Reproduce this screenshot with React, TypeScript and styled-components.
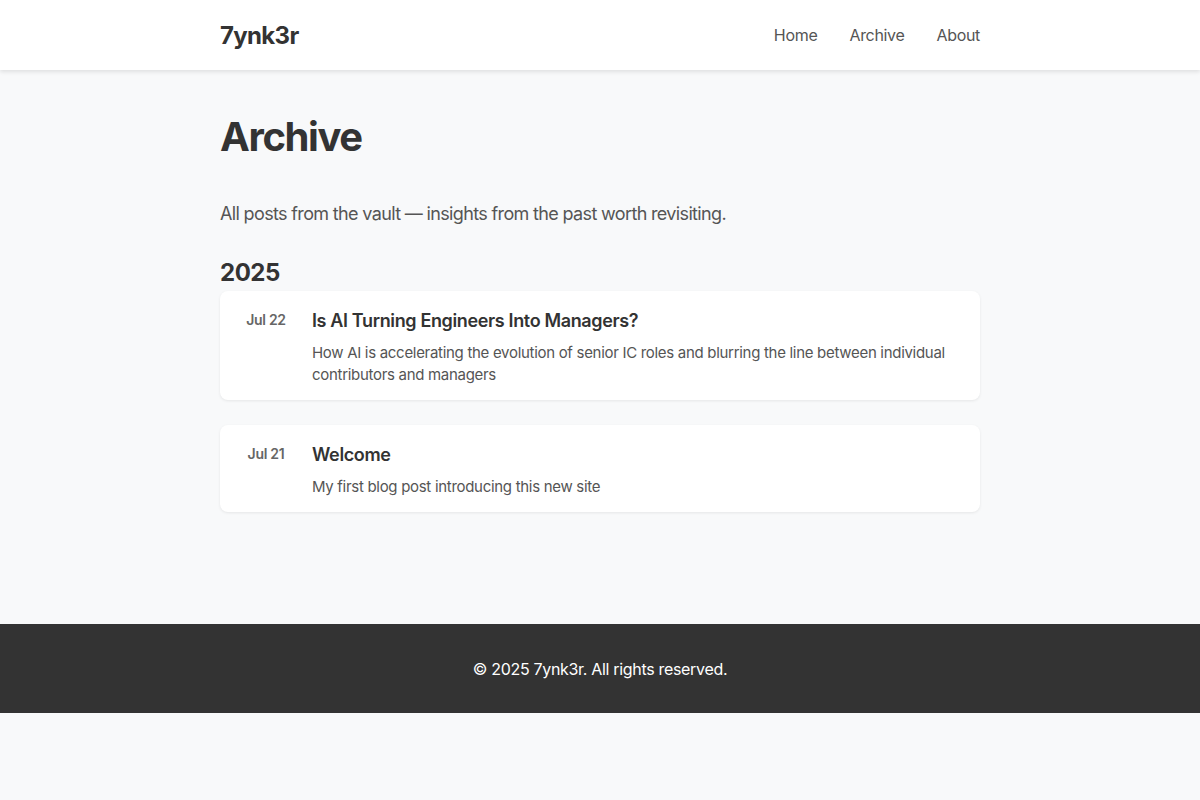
import React from "react";
import styled, { createGlobalStyle } from "styled-components";

const Global = createGlobalStyle`
  * { box-sizing: border-box; }
  html, body { margin: 0; padding: 0; }
  body {
    background: #f8f9fa;
    font-family: Inter, "Noto Sans", sans-serif;
    color: #333;
  }
`;

const Header = styled.header`
  background: #fff;
  height: 70px;
  box-shadow: 0 2px 4px rgba(0, 0, 0, 0.1);
`;

const Container = styled.div`
  width: 760px;
  margin: 0 auto;
`;

const HeaderInner = styled(Container)`
  height: 100%;
  display: flex;
  align-items: center;
  justify-content: space-between;
`;

const Logo = styled.a`
  font-size: 24px;
  font-weight: 700;
  letter-spacing: -0.028em;
  color: #333;
  text-decoration: none;
`;

const Nav = styled.nav`
  display: flex;
  gap: 32px;
`;

const NavLink = styled.a`
  font-size: 16px;
  letter-spacing: -0.02em;
  color: #555;
  text-decoration: none;
`;

const Main = styled.main`
  padding: 43px 0 112px;
`;

const Title = styled.h1`
  font-size: 40px;
  line-height: 48px;
  font-weight: 700;
  letter-spacing: -0.035em;
  margin: 0 0 39px;
  color: #333;
`;

const Intro = styled.p`
  font-size: 18px;
  line-height: 27px;
  letter-spacing: -0.036em;
  color: #555;
  margin: 0 0 31px;
`;

const Year = styled.h2`
  font-size: 24px;
  line-height: 29px;
  font-weight: 700;
  letter-spacing: -0.02em;
  margin: 0 0 4px;
  color: #333;
`;

const List = styled.div`
  display: flex;
  flex-direction: column;
  gap: 25px;
`;

const Card = styled.article`
  background: #fff;
  border-radius: 8px;
  box-shadow: 0 1px 3px rgba(0, 0, 0, 0.08);
  padding: 18px 24px 14px;
  display: flex;
  gap: 24px;
`;

const DateLabel = styled.div`
  width: 44px;
  flex-shrink: 0;
  text-align: center;
  font-size: 14px;
  line-height: 22px;
  font-weight: 600;
  letter-spacing: -0.02em;
  color: #666;
`;

const Body = styled.div`
  flex: 1;
`;

const PostTitle = styled.h3`
  font-size: 18px;
  line-height: 24px;
  font-weight: 600;
  letter-spacing: -0.02em;
  margin: 0 0 9px;
  color: #333;
`;

const Desc = styled.p`
  font-size: 15px;
  line-height: 22px;
  letter-spacing: -0.02em;
  color: #555;
  margin: 0;
`;

const Footer = styled.footer`
  background: #333;
  color: #fff;
  height: 89px;
  display: flex;
  align-items: center;
  justify-content: center;
  font-size: 16px;
  letter-spacing: -0.02em;
`;

const posts = [
  {
    date: "Jul 22",
    title: "Is AI Turning Engineers Into Managers?",
    desc: "How AI is accelerating the evolution of senior IC roles and blurring the line between individual contributors and managers",
  },
  {
    date: "Jul 21",
    title: "Welcome",
    desc: "My first blog post introducing this new site",
  },
];

export default function App() {
  return (
    <>
      <Global />
      <Header>
        <HeaderInner>
          <Logo href="#">7ynk3r</Logo>
          <Nav>
            <NavLink href="#">Home</NavLink>
            <NavLink href="#">Archive</NavLink>
            <NavLink href="#">About</NavLink>
          </Nav>
        </HeaderInner>
      </Header>
      <Main>
        <Container>
          <Title>Archive</Title>
          <Intro>All posts from the vault — insights from the past worth revisiting.</Intro>
          <Year>2025</Year>
          <List>
            {posts.map((p) => (
              <Card key={p.title}>
                <DateLabel>{p.date}</DateLabel>
                <Body>
                  <PostTitle>{p.title}</PostTitle>
                  <Desc>{p.desc}</Desc>
                </Body>
              </Card>
            ))}
          </List>
        </Container>
      </Main>
      <Footer>© 2025 7ynk3r. All rights reserved.</Footer>
    </>
  );
}
